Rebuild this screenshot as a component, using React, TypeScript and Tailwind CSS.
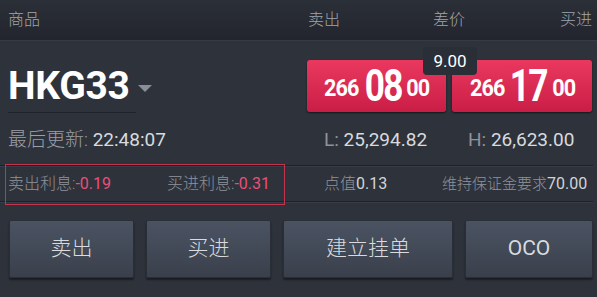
import React from 'react';

const cjk = "font-['Roboto','Noto_Sans_CJK_SC',sans-serif]";

const PriceButton = ({ head, big, tail }: { head: string; big: string; tail: string }) => (
    <div className="h-[52px] rounded-[3px] bg-gradient-to-b from-[#ea385f] to-[#ca1d46] shadow-[0_1px_2px_rgba(0,0,0,0.6)] flex items-center justify-center gap-[2px] text-white font-bold leading-none">
        <span className="inline-block text-[24px] tracking-[-1px] scale-x-[0.9] mt-[3px]">{head}</span>
        <span className="inline-block text-[44px] tracking-[-2px] scale-x-[0.8] -mx-[3px]">{big}</span>
        <span className="inline-block text-[24px] tracking-[-1px] scale-x-[0.9] mt-[3px]">{tail}</span>
    </div>
);

const ActionButton = ({ label, className }: { label: string; className: string }) => (
    <button className={`h-[58px] rounded-[2px] bg-gradient-to-b from-[#4b5363] to-[#3a404b] border border-[#2a2e36] shadow-[0_2px_2px_rgba(0,0,0,0.45)] text-[21px] text-[#d9dbdf] font-light ${className}`}>
        {label}
    </button>
);

export default function App() {
    return (
        <div className={`w-[597px] h-[297px] bg-[#2e323b] overflow-hidden ${cjk}`}>
            <header className="h-[41px] bg-gradient-to-b from-[#2b2f38] to-[#22252d] border-b border-[#363b45] flex items-center pl-2 text-[16px] text-[#a0a4ab] font-light">
                <span className="w-[300px]">商品</span>
                <span className="w-[125px]">卖出</span>
                <span className="w-[127px]">差价</span>
                <span>买进</span>
            </header>

            <div className="relative flex h-[76px]">
                <div className="w-[307px] pl-2 pt-[26px]">
                    <div className="flex items-center w-[128px] border-b border-[#1f2229] pb-[6px]">
                        <span className="text-[39px] font-bold text-white leading-none tracking-[-0.3px]">HKG33</span>
                        <span className="ml-[8px] mt-[4px] w-0 h-0 border-l-[7px] border-r-[7px] border-t-[7px] border-l-transparent border-r-transparent border-t-[#8a8e96]" />
                    </div>
                </div>
                <div className="flex gap-[6px] pt-[19px]">
                    <div className="w-[139px]"><PriceButton head="266" big="08" tail="00" /></div>
                    <div className="w-[140px]"><PriceButton head="266" big="17" tail="00" /></div>
                </div>
                <div className="absolute left-[423px] top-[6px] w-[54px] h-[28px] bg-[#2a2e36] rounded-b-[4px] rounded-t-[2px] flex items-center justify-center text-[17px] text-white leading-none">
                    9.00
                </div>
            </div>

            <div className="h-[48px] flex items-center pl-2 text-[19px] leading-none pb-[4px]">
                <div className="w-[316px]">
                    <span className="text-[#9a9ea6] font-light">最后更新: </span>
                    <span className="text-[#d8dade]">22:48:07</span>
                </div>
                <div className="w-[144px]">
                    <span className="text-[#8e929a]">L: </span>
                    <span className="text-[#d8dade]">25,294.82</span>
                </div>
                <div>
                    <span className="text-[#8e929a]">H: </span>
                    <span className="text-[#d8dade]">26,623.00</span>
                </div>
            </div>

            <div className="relative w-[593px] h-[37px] border-t border-b border-[#1e2128] shadow-[0_1px_0_#383d47,inset_0_1px_0_#383d47] flex items-center text-[16px] leading-none">
                <div className="absolute left-[5px] -top-[2px] w-[280px] h-[41px] border border-[#c5344f]" />
                <div className="w-[167px] pl-2">
                    <span className="text-[#8e929a] font-light">卖出利息:</span>
                    <span className="text-[#ea4f78]">-0.19</span>
                </div>
                <div className="w-[157px]">
                    <span className="text-[#8e929a] font-light">买进利息:</span>
                    <span className="text-[#ea4f78]">-0.31</span>
                </div>
                <div className="w-[118px]">
                    <span className="text-[#8e929a] font-light">点值</span>
                    <span className="text-[#d2d4d8]">0.13</span>
                </div>
                <div>
                    <span className="text-[#8e929a] font-light text-[15px]">维持保证金要求</span>
                    <span className="text-[#d2d4d8]">70.00</span>
                </div>
            </div>

            <div className="flex gap-[12px] pl-[9px] pt-[18px]">
                <ActionButton label="卖出" className="w-[125px]" />
                <ActionButton label="买进" className="w-[125px]" />
                <ActionButton label="建立挂单" className="w-[170px]" />
                <ActionButton label="OCO" className="w-[128px] font-normal" />
            </div>
        </div>
    );
}
